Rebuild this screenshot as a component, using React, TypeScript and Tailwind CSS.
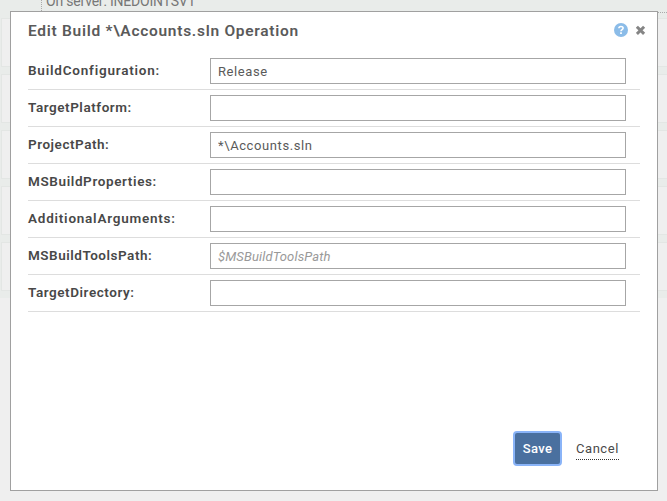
type Field = { label: string; tracking: string; value?: string; placeholder?: string };

const fields: Field[] = [
  { label: 'BuildConfiguration:', tracking: 'tracking-[0.79px]', value: 'Release' },
  { label: 'TargetPlatform:', tracking: 'tracking-[0.55px]' },
  { label: 'ProjectPath:', tracking: 'tracking-[0.54px]', value: '*\\Accounts.sln' },
  { label: 'MSBuildProperties:', tracking: 'tracking-[0.62px]' },
  { label: 'AdditionalArguments:', tracking: 'tracking-[0.77px]' },
  { label: 'MSBuildToolsPath:', tracking: 'tracking-[0.52px]', placeholder: '$MSBuildToolsPath' },
  { label: 'TargetDirectory:', tracking: 'tracking-[0.56px]' },
];

function Backdrop() {
  return (
    <div className="h-[298px] bg-[#e9ecea]">
      <div className="flex h-[18px] pl-[41px]">
        <div className="h-[13px] flex-1 border-b border-l border-dotted border-[#aaaaaa] pl-1">
          <div className="-mt-[7px] text-[14px] leading-4 tracking-[-0.2px] whitespace-nowrap text-[#777777]">On server: INEDOINTSV1</div>
        </div>
      </div>
      <div className="flex flex-col gap-[7px] pl-px">
        {[0, 1, 2, 3, 4].map((n) => (
          <div key={n} className="h-[49px] border border-r-0 border-[#e3e6e4] bg-[#efefef]" />
        ))}
      </div>
    </div>
  );
}

function FieldRow({ field }: { field: Field }) {
  return (
    <label className="flex h-[37px] items-center border-b border-[#dddddd]">
      <span className={`w-[182px] shrink-0 pb-0.5 text-[13.5px] leading-4 font-semibold whitespace-nowrap text-[#484848] ${field.tracking}`}>{field.label}</span>
      <input
        type="text"
        defaultValue={field.value}
        placeholder={field.placeholder}
        className="h-[26px] w-[416px] border border-[#a6a6a6] bg-white pt-px pl-[7px] text-[13px] tracking-[0.6px] text-[#5a5a5a] outline-none placeholder:tracking-[0.14px] placeholder:text-[#999999] placeholder:italic"
      />
    </label>
  );
}

export default function App() {
  return (
    <div className="relative h-[501px] w-[667px] overflow-hidden bg-[#efefef] font-['Roboto',sans-serif]">
      <Backdrop />
      <div className="absolute top-[11px] left-[10px] flex h-[480px] w-[648px] flex-col border border-[#a0a0a0] bg-white pr-[17px] pl-[17px]">
        <header className="flex h-[41px] items-start justify-between">
          <h1 className="mt-[9px] text-[15.5px] leading-5 font-semibold tracking-[0.72px] whitespace-nowrap text-[#5a5a5a]">Edit Build *\Accounts.sln Operation</h1>
          <div className="mt-[11px] mr-[-6px] flex items-center gap-2">
            <svg width="14" height="14" viewBox="0 0 14 14">
              <circle cx="7" cy="7" r="7" fill="#8bbce8" />
              <path d="M4.9 5.2C4.9 3 9.1 3 9.1 5.1C9.1 6.7 7 6.5 7 8.3" fill="none" stroke="#fff" strokeWidth="1.6" />
              <rect x="6.1" y="9.3" width="1.8" height="1.7" fill="#fff" />
            </svg>
            <svg width="10" height="14" viewBox="0 0 10 14">
              <path d="M0.9 3.7L8.1 10.9M8.1 3.7L0.9 10.9" stroke="#858585" strokeWidth="3" />
            </svg>
          </div>
        </header>
        <div className="w-[612px]">
          {fields.map((f) => <FieldRow key={f.label} field={f} />)}
        </div>
        <footer className="mt-auto mb-[24px] flex items-center gap-[14px] pl-[485px]">
          <button className="h-[35px] w-[49px] shrink-0 rounded-[4px] border-2 border-[#8ab4f8] bg-[#4a709f] text-[13px] font-medium tracking-[0.4px] text-white">Save</button>
          <a className="border-b border-dotted border-[#333333] text-[13px] leading-[21px] tracking-[0.55px] text-[#4a4a4a]">Cancel</a>
        </footer>
      </div>
    </div>
  );
}
